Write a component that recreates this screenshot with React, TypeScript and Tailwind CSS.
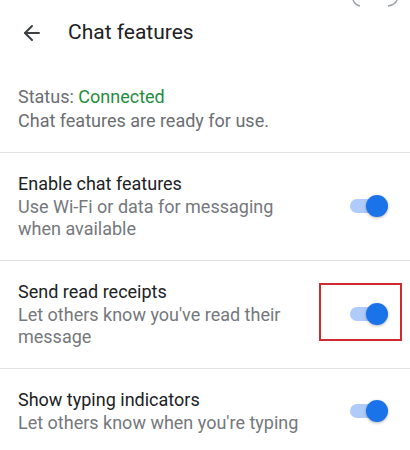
import { ArrowLeft } from "lucide-react";

type Item = {
  title: string;
  subtitle: string;
  marked?: boolean;
};

const items: Item[] = [
  { title: "Enable chat features", subtitle: "Use Wi-Fi or data for messaging when available" },
  { title: "Send read receipts", subtitle: "Let others know you've read their message", marked: true },
  { title: "Show typing indicators", subtitle: "Let others know when you're typing" },
];

function Toggle() {
  return (
    <div className="relative w-[38px] h-[22px] flex items-center shrink-0">
      <div className="w-[36px] h-[14px] rounded-full bg-[#aecbfa]" />
      <div className="absolute right-0 top-0 w-[22px] h-[22px] rounded-full bg-[#1a73e8] shadow-[0_1px_3px_rgba(0,0,0,0.3)]" />
    </div>
  );
}

function SettingRow({ item }: { item: Item }) {
  return (
    <div className="relative flex items-center justify-between pl-[18px] pr-[22px] pt-[18px] pb-[20px] border-t border-[#e3e3e3]">
      <div className="flex flex-col max-w-[300px]">
        <span className="text-[18px] leading-[25px] text-[#202124]">{item.title}</span>
        <span className="text-[18px] leading-[22px] text-[#75787c]">{item.subtitle}</span>
      </div>
      <Toggle />
      {item.marked && (
        <div className="absolute top-[22px] right-[8px] w-[83px] h-[58px] border-2 border-[#d12a2f]" />
      )}
    </div>
  );
}

export default function App() {
  return (
    <div className="relative w-[410px] h-[450px] bg-white overflow-hidden font-['Roboto','Liberation_Sans',sans-serif]">
      {/* clipped bits of the status bar above */}
      <svg className="absolute top-0 right-[12px]" width="46" height="8" viewBox="0 0 46 8" fill="none">
        <path d="M1 0 Q3 5 8 6" stroke="#9aa0a6" strokeWidth="1.5" />
        <path d="M45 0 Q43 5 36 6" stroke="#9aa0a6" strokeWidth="1.5" />
      </svg>

      <div className="flex items-center h-[64px] pl-[20px] pt-[2px]">
        <ArrowLeft className="w-[24px] h-[24px] text-[#3c4043]" strokeWidth={2} />
        <span className="ml-[24px] text-[21px] text-[#202124]">Chat features</span>
      </div>

      <div className="flex flex-col pl-[18px] pt-[21px] pb-[19px] text-[18px] leading-[24px] text-[#6b6e72]">
        <span>
          Status: <span className="text-[#1e8e3e]">Connected</span>
        </span>
        <span>Chat features are ready for use.</span>
      </div>

      {items.map((item) => (
        <SettingRow key={item.title} item={item} />
      ))}
    </div>
  );
}
